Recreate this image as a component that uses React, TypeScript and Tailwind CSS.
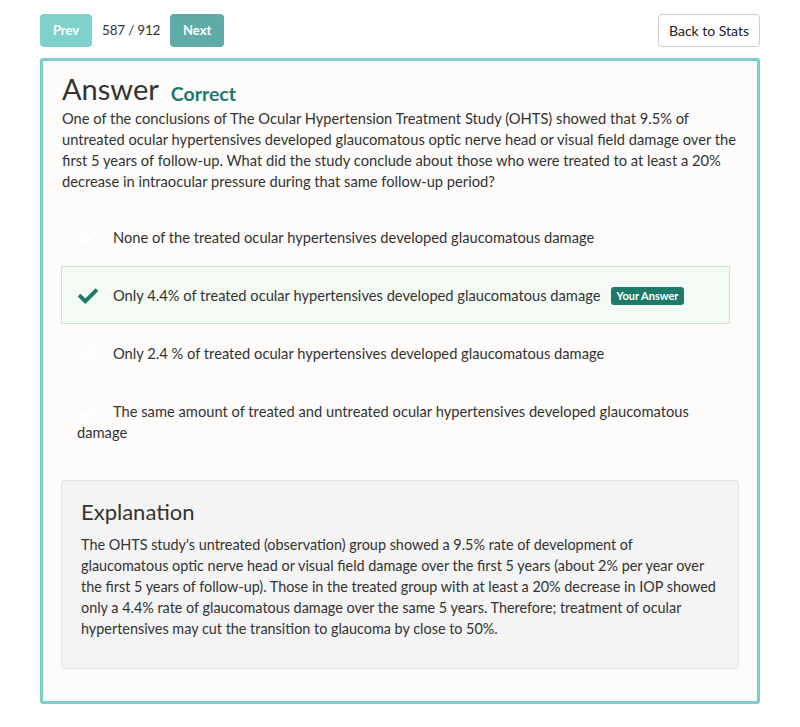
import React from "react";

const Check = ({ className }: { className?: string }) => (
  <svg viewBox="0 0 24 24" className={className} fill="currentColor">
    <path d="M20.3 4.6 9 15.9 3.7 10.6 0.8 13.5l8.2 8.2L23.2 7.5z" />
  </svg>
);

const options = [
  { text: "None of the treated ocular hypertensives developed glaucomatous damage", selected: false },
  { text: "Only 4.4% of treated ocular hypertensives developed glaucomatous damage", selected: true },
  { text: "Only 2.4 % of treated ocular hypertensives developed glaucomatous damage", selected: false },
  { text: "The same amount of treated and untreated ocular hypertensives developed glaucomatous damage", selected: false },
];

export default function App() {
  return (
    <div className="min-h-[727px] bg-white text-[#333]" style={{ fontFamily: "Lato, 'Open Sans', sans-serif" }}>
      <div className="px-10 pt-[14px]">
        <div className="flex items-center justify-between">
          <div className="flex items-center">
            <button className="h-[33px] w-[52px] rounded-[4px] bg-[#80d0cc] text-[13px] font-bold text-white">Prev</button>
            <span className="mx-[10px] text-[13.5px] tracking-[-0.2px]">587 / 912</span>
            <button className="h-[33px] w-[54px] rounded-[4px] bg-[#5eaba7] text-[13px] font-bold text-white">Next</button>
          </div>
          <button className="h-[33px] w-[102px] rounded-[4px] border border-[#ccc] bg-white text-[14px] text-[#222]">Back to Stats</button>
        </div>
        <div className="mt-[11px] rounded-[3px] border-[3px] border-[#7ccfcb] bg-[#fdfcfa] px-[18px] pb-[32px] pt-[10px]">
          <div className="flex items-end pl-px">
            <h1 className="text-[29px] leading-[36px] text-[#333]">Answer</h1>
            <span className="mb-[1px] ml-[12px] text-[19.5px] font-bold leading-[24px] text-[#1d7a6b]">Correct</span>
          </div>
          <p className="mt-[1px] pl-px text-[14.7px] leading-[21px]">
            One of the conclusions of The Ocular Hypertension Treatment Study (OHTS) showed that 9.5% of untreated ocular hypertensives developed glaucomatous optic nerve head or visual field damage over the first 5 years of follow-up. What did the study conclude about those who were treated to at least a 20% decrease in intraocular pressure during that same follow-up period?
          </p>
          <div className="mr-[9px] mt-[16px] flex flex-col">
            {options.map((o, i) => (
              <div
                key={i}
                className={
                  "border px-[15px] py-[17px] text-[14.7px] leading-[21px] " +
                  (o.selected ? "border-[#cbe4cb] bg-[#f4faf4]" : "border-transparent")
                }
              >
                <Check
                  className={
                    "mr-[14px] inline-block h-[22px] w-[22px] align-[-5px] " +
                    (o.selected ? "text-[#1d7a6b]" : "text-white")
                  }
                />
                {o.text}
                {o.selected && (
                  <span className="ml-[10px] inline-block rounded-[3px] bg-[#1d7a6b] px-[6px] align-[1px] text-[11px] font-bold leading-[18px] text-white">
                    Your Answer
                  </span>
                )}
              </div>
            ))}
          </div>
          <div className="mt-[19px] rounded-[4px] border border-[#e3e3e3] bg-[#f4f4f4] px-[19px] pb-[29px] pt-[16px]">
            <h2 className="text-[22px] leading-[30px] text-[#333]">Explanation</h2>
            <p className="mt-[7px] text-[14.4px] leading-[21px]">
              The OHTS study's untreated (observation) group showed a 9.5% rate of development of glaucomatous optic nerve head or visual field damage over the first 5 years (about 2% per year over the first 5 years of follow-up). Those in the treated group with at least a 20% decrease in IOP showed only a 4.4% rate of glaucomatous damage over the same 5 years. Therefore; treatment of ocular hypertensives may cut the transition to glaucoma by close to 50%.
            </p>
          </div>
        </div>
      </div>
    </div>
  );
}
